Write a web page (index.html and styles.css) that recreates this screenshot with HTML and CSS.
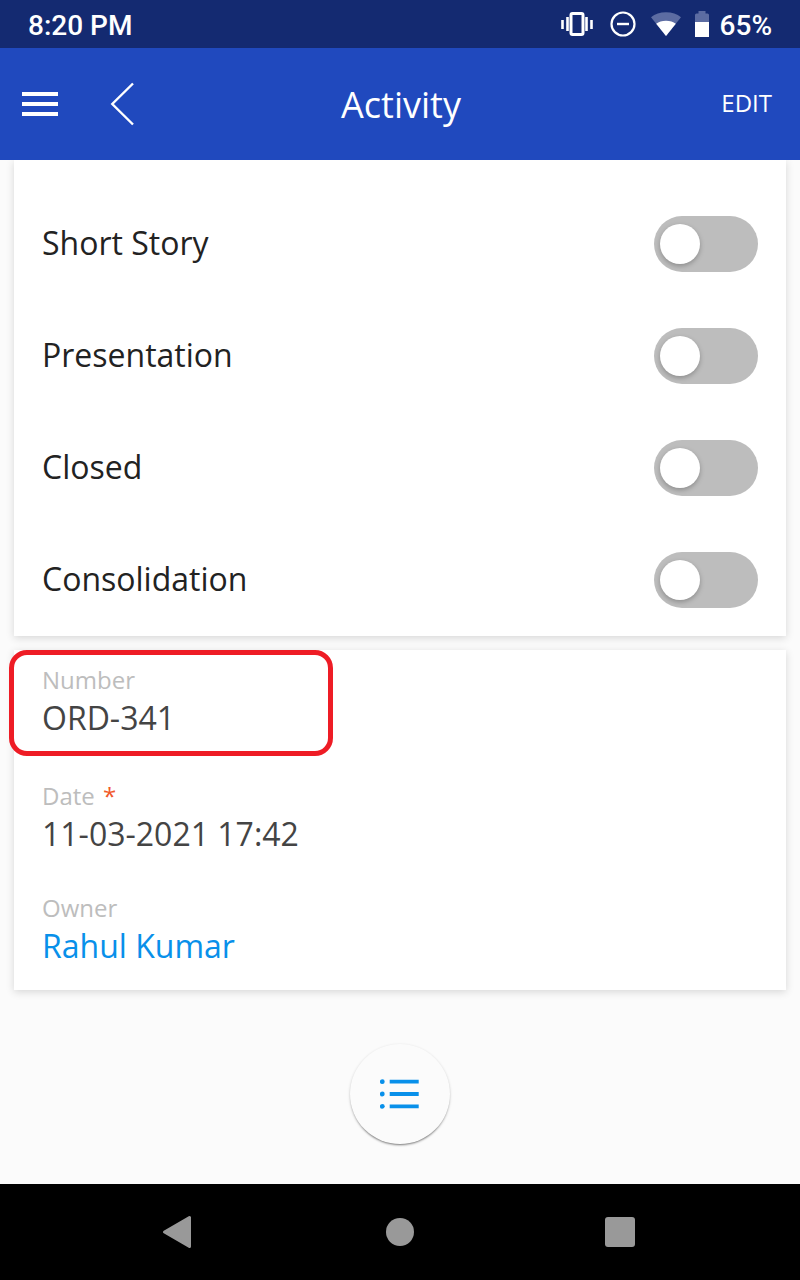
FILE: index.html
```
<!DOCTYPE html>
<html lang="en">
<head>
  <meta charset="UTF-8">
  <title>Activity</title>
  <link rel="stylesheet" href="styles.css">
</head>
<body>
  <!-- Status bar -->
  <div class="status-bar">
    <span class="time">8:20 PM</span>
    <svg class="status-icons" width="152" height="48" viewBox="560 0 152 48">
      <g fill="none" stroke="#fff">
        <rect x="571" y="13.5" width="12" height="21" rx="1.5" stroke-width="3"/>
        <path d="M567.5 17v14M586.5 17v14" stroke-width="2.6"/>
        <path d="M562.5 20v9M591.5 20v9" stroke-width="2.6"/>
        <circle cx="623" cy="24" r="11.5" stroke-width="2.2"/>
        <path d="M617 24h12" stroke-width="2.4"/>
      </g>
      <path d="M666 36L651 17.2Q657 12.3 666 12.3T681 17.2z" fill="#5c6ca2"/>
      <path d="M666 36L656.2 23.7Q660 20.7 666 20.7T675.8 23.7z" fill="#fff"/>
      <path d="M695 22v-7q0-1.5 1.5-1.5h2V11h7v2.5h2q1.5 0 1.5 1.5v7z" fill="#5c6ca2"/>
      <path d="M695 22h14v15h-14z" fill="#fff"/>
    </svg>
    <span class="battery">65%</span>
  </div>

  <!-- Header -->
  <header class="header">
    <div class="header-left">
      <div class="menu">
        <span></span>
        <span></span>
        <span></span>
      </div>
      <svg class="back" width="24" height="44" viewBox="0 0 24 44">
        <path d="M23 1.5L2.3 22L23 42.5" fill="none" stroke="#fff" stroke-width="2.4"/>
      </svg>
    </div>
    <h1>Activity</h1>
    <div class="edit">EDIT</div>
  </header>

  <main class="content">
    <!-- Toggles -->
    <section class="card toggles">
      <div class="toggle-row">
        <span class="name">Short Story</span>
        <div class="switch"></div>
      </div>
      <div class="toggle-row">
        <span class="name">Presentation</span>
        <div class="switch"></div>
      </div>
      <div class="toggle-row">
        <span class="name">Closed</span>
        <div class="switch"></div>
      </div>
      <div class="toggle-row">
        <span class="name">Consolidation</span>
        <div class="switch"></div>
      </div>
    </section>

    <!-- Details -->
    <section class="card details">
      <div class="highlight"></div>
      <div class="field number">
        <div class="label">Number</div>
        <div class="value">ORD-341</div>
      </div>
      <div class="field">
        <div class="label">Date <span class="required">*</span></div>
        <div class="value">11-03-2021 17:42</div>
      </div>
      <div class="field">
        <div class="label">Owner</div>
        <div class="value link">Rahul Kumar</div>
      </div>
    </section>

    <div class="fab">
      <svg width="40" height="32" viewBox="0 0 40 32" fill="#0890ea">
        <circle cx="2.3" cy="3.7" r="2.4"/>
        <circle cx="2.3" cy="16" r="2.4"/>
        <circle cx="2.3" cy="28.3" r="2.4"/>
        <path d="M9.7 1.8h29v3.8h-29zM9.7 14.1h29v3.8h-29zM9.7 26.4h29v3.8h-29z"/>
      </svg>
    </div>
  </main>

  <!-- Navigation bar -->
  <nav class="nav-bar">
    <svg width="32" height="36" viewBox="0 0 32 36">
      <path d="M3.5 18L28.5 3.5V32.5z" fill="#999" stroke="#999" stroke-width="3" stroke-linejoin="round"/>
    </svg>
    <div class="home"></div>
    <div class="recent"></div>
  </nav>
</body>
</html>
```

FILE: styles.css
```
* {
  box-sizing: border-box;
}

body {
  margin: 0;
  height: 1280px;
  display: flex;
  flex-direction: column;
  overflow: hidden;
  font-family: 'Open Sans', sans-serif;
  background-color: #fbfbfb;
}

.status-bar {
  height: 48px;
  display: flex;
  align-items: center;
  padding: 3px 28px 0;
  background-color: #142a71;
  color: #fff;
  font-family: Roboto, sans-serif;
  font-size: 28px;
  font-weight: 500;
}

.status-icons {
  margin: -3px 8px 0 auto;
}

.header {
  height: 112px;
  display: grid;
  grid-template-columns: 1fr auto 1fr;
  align-items: center;
  padding: 0 28px 0 22px;
  background-color: #2049be;
  color: #fff;
}

.header-left {
  display: flex;
  align-items: center;
  gap: 52px;
}

.menu {
  display: flex;
  flex-direction: column;
  gap: 6px;
}

.menu span {
  width: 36px;
  height: 4px;
  background-color: #fff;
}

.header h1 {
  margin: 0 0 0 8px;
  font-size: 36px;
  font-weight: 400;
}

.edit {
  font-size: 24px;
  text-align: right;
  padding-bottom: 3px;
}

.content {
  flex: 1;
  padding: 0 14px;
  overflow: hidden;
}

.card {
  background-color: #fff;
  box-shadow: 0 2px 8px rgba(0, 0, 0, 0.15);
}

.toggles {
  padding: 28px 28px 0;
  margin-bottom: 14px;
}

.toggle-row {
  height: 112px;
  display: flex;
  justify-content: space-between;
  align-items: center;
}

.name {
  font-size: 32px;
  line-height: 44px;
  padding-bottom: 2px;
  color: #222;
}

.switch {
  width: 104px;
  height: 56px;
  padding: 8px 6px;
  border-radius: 28px;
  background-color: #bdbdbd;
}

.switch::before {
  content: '';
  display: block;
  width: 40px;
  height: 40px;
  border-radius: 50%;
  background-color: #fff;
  box-shadow: 0 2px 5px rgba(0, 0, 0, 0.26);
}

.details {
  position: relative;
}

.field {
  height: 112px;
  padding: 14px 28px 0;
}

.field.number {
  height: 116px;
}

.label {
  font-size: 24px;
  line-height: 32px;
  color: #bdbdbd;
}

.required {
  margin-left: 2px;
  color: #f1592a;
}

.value {
  font-size: 32px;
  line-height: 44px;
  color: #444;
}

.value.link {
  color: #0890ea;
}

/* red frame around the number field */
.highlight {
  position: absolute;
  left: -5px;
  top: 0;
  width: 324px;
  height: 106px;
  border: 5px solid #ee1c25;
  border-radius: 18px;
}

.fab {
  width: 100px;
  height: 100px;
  margin: 54px auto 0;
  display: flex;
  justify-content: center;
  align-items: center;
  border-radius: 50%;
  background-color: #fbfbfb;
  box-shadow: 0 2px 2px -1px rgba(0, 0, 0, 0.4), 0 1px 3px rgba(0, 0, 0, 0.18);
}

.nav-bar {
  height: 96px;
  display: flex;
  justify-content: space-between;
  align-items: center;
  padding: 0 165px 0 161px;
  background-color: #000;
}

.home {
  width: 28px;
  height: 28px;
  margin-left: 2px;
  border-radius: 50%;
  background-color: #999;
}

.recent {
  width: 30px;
  height: 30px;
  border-radius: 3px;
  background-color: #999;
}
```
